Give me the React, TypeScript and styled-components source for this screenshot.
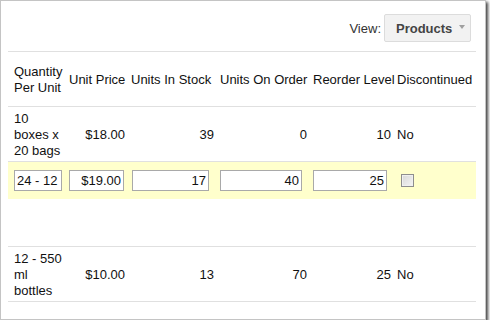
import React, { useState } from "react";
import styled, { createGlobalStyle } from "styled-components";

const GlobalStyle = createGlobalStyle`
  html, body {
    margin: 0;
    padding: 0;
    background: #ffffff;
  }
  body {
    font-family: "Liberation Sans", Arial, sans-serif;
    font-size: 13px;
    color: #111;
  }
`;

const COLS = "58px 62px 89px 93px 84px 81px";

const Frame = styled.div`
  box-sizing: border-box;
  width: 486px;
  height: 320px;
  border: 1px solid #c4c4c4;
  box-shadow: 2px 2px 3px rgba(0, 0, 0, 0.75);
  background: #fff;
  padding: 0 9px 0 7px;
`;

const Toolbar = styled.div`
  box-sizing: border-box;
  display: flex;
  justify-content: flex-end;
  align-items: center;
  height: 51px;
  padding: 13px 5px 9px 0;
  border-bottom: 1px solid #e0e0e0;
  gap: 3px;
`;

const ViewLabel = styled.span`
  color: #333;
  font-size: 13px;
`;

const ViewButton = styled.button`
  box-sizing: border-box;
  display: flex;
  align-items: center;
  height: 28px;
  width: 87px;
  padding: 0 5px 0 11px;
  border: 1px solid #dcdcdc;
  border-radius: 2px;
  background: #f2f2f2;
  font-family: "Liberation Sans", Arial, sans-serif;
  font-size: 13px;
  font-weight: bold;
  color: #444;
  cursor: pointer;
`;

const Caret = styled.span`
  margin-left: auto;
  width: 0;
  height: 0;
  border-left: 3.5px solid transparent;
  border-right: 3.5px solid transparent;
  border-top: 4px solid #a0a0a0;
  margin-top: -2px;
`;

const Row = styled.div<{ $height: number; $tint?: boolean }>`
  display: grid;
  grid-template-columns: ${COLS};
  height: ${(p) => p.$height}px;
  align-items: center;
  background: ${(p) => (p.$tint ? "#ffffcc" : "transparent")};
`;

const RowGroup = styled.div<{ $height: number }>`
  height: ${(p) => p.$height}px;
  border-bottom: 1px solid #e0e0e0;
`;

const Cell = styled.div<{ $align?: "left" | "right"; $first?: boolean; $wrap?: boolean }>`
  padding: 1px 3px 0 ${(p) => (p.$first ? 6 : 3)}px;
  text-align: ${(p) => p.$align || "left"};
  line-height: 16px;
  white-space: ${(p) => (p.$wrap ? "normal" : "nowrap")};
  color: #111;
`;

const EditCell = styled.div<{ $offset: number }>`
  padding-left: ${(p) => p.$offset}px;
  display: flex;
  align-items: center;
`;

const TextInput = styled.input<{ $w: number; $align?: "left" | "right" }>`
  box-sizing: border-box;
  width: ${(p) => p.$w}px;
  height: 21px;
  padding: 0 2px;
  margin: 0;
  border: 1px solid #a9a9a9;
  background: #fff;
  font-family: "Liberation Sans", Arial, sans-serif;
  font-size: 13px;
  color: #111;
  text-align: ${(p) => p.$align || "right"};
  outline: none;
`;

const Check = styled.input`
  appearance: none;
  box-sizing: border-box;
  width: 13px;
  height: 13px;
  margin: 0;
  border: 1px solid #8e8e8e;
  background: linear-gradient(135deg, #d8d8d8 0%, #f4f4f4 100%);
  box-shadow: inset 0 0 0 1px #f0f0f0;
`;

type Product = {
  qty: string;
  price: string;
  stock: string;
  order: string;
  reorder: string;
  disc: string;
};

const rowA: Product = { qty: "10 boxes x 20 bags", price: "$18.00", stock: "39", order: "0", reorder: "10", disc: "No" };
const rowB: Product = { qty: "12 - 550 ml bottles", price: "$10.00", stock: "13", order: "70", reorder: "25", disc: "No" };

function DataRow({ p }: { p: Product }) {
  return (
    <RowGroup $height={54}>
      <Row $height={54}>
        <Cell $first $wrap>{p.qty}</Cell>
        <Cell $align="right">{p.price}</Cell>
        <Cell $align="right">{p.stock}</Cell>
        <Cell $align="right">{p.order}</Cell>
        <Cell $align="right">{p.reorder}</Cell>
        <Cell>{p.disc}</Cell>
      </Row>
    </RowGroup>
  );
}

export default function App() {
  const [edit, setEdit] = useState({ qty: "24 - 12 oz bottles", price: "$19.00", stock: "17", order: "40", reorder: "25" });
  const [disc, setDisc] = useState(false);

  return (
    <>
      <GlobalStyle />
      <Frame>
        <Toolbar>
          <ViewLabel>View:</ViewLabel>
          <ViewButton>
            Products
            <Caret />
          </ViewButton>
        </Toolbar>
        <RowGroup $height={54}>
          <Row $height={54}>
            <Cell $first $wrap>Quantity Per Unit</Cell>
            <Cell>Unit Price</Cell>
            <Cell>Units In Stock</Cell>
            <Cell>Units On Order</Cell>
            <Cell>Reorder Level</Cell>
            <Cell>Discontinued</Cell>
          </Row>
        </RowGroup>
        <DataRow p={rowA} />
        <RowGroup $height={84}>
          <Row $height={37} $tint>
            <EditCell $offset={6}>
              <TextInput $w={48} $align="left" value={edit.qty} onChange={(e) => setEdit({ ...edit, qty: e.target.value })} />
            </EditCell>
            <EditCell $offset={3}>
              <TextInput $w={55} value={edit.price} onChange={(e) => setEdit({ ...edit, price: e.target.value })} />
            </EditCell>
            <EditCell $offset={4}>
              <TextInput $w={77} value={edit.stock} onChange={(e) => setEdit({ ...edit, stock: e.target.value })} />
            </EditCell>
            <EditCell $offset={3}>
              <TextInput $w={82} value={edit.order} onChange={(e) => setEdit({ ...edit, order: e.target.value })} />
            </EditCell>
            <EditCell $offset={3}>
              <TextInput $w={74} value={edit.reorder} onChange={(e) => setEdit({ ...edit, reorder: e.target.value })} />
            </EditCell>
            <EditCell $offset={7}>
              <Check type="checkbox" checked={disc} onChange={(e) => setDisc(e.target.checked)} />
            </EditCell>
          </Row>
        </RowGroup>
        <DataRow p={rowB} />
      </Frame>
    </>
  );
}
